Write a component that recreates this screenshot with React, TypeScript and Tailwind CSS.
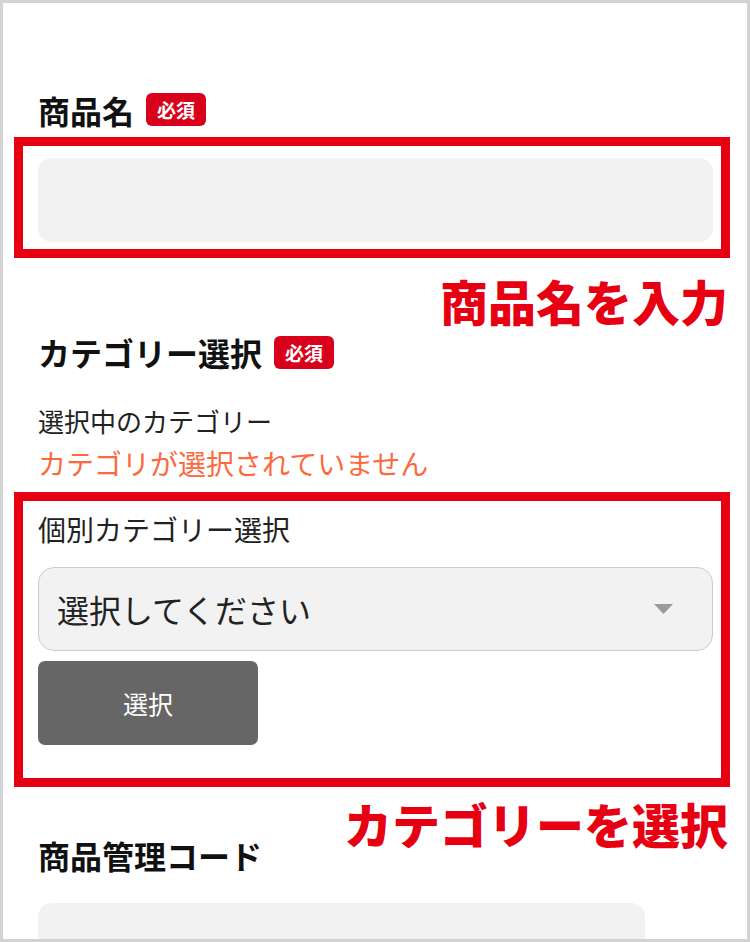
import React from 'react';

const font = "font-['Noto_Sans_CJK_JP','Noto_Sans',sans-serif]";

function RequiredBadge() {
  return (
    <span className="ml-[12px] inline-flex h-[33px] w-[60px] items-center justify-center rounded-[6px] bg-[#d9001b] text-[19px] font-bold leading-none text-white">
      必須
    </span>
  );
}

function Caret() {
  return (
    <svg width="19" height="10" viewBox="0 0 19 10" aria-hidden="true">
      <polygon points="0,0 19,0 9.5,10" fill="#9a9a9a" />
    </svg>
  );
}

export default function App() {
  return (
    <div className={`h-[942px] w-[750px] overflow-hidden border-[3px] border-[#d3d3d3] bg-white px-[11px] ${font}`}>
      {/* 商品名 */}
      <div className="mt-[90px] flex h-[33px] items-center pl-[24px]">
        <h2 className="text-[32px] font-bold leading-none text-[#111]">商品名</h2>
        <RequiredBadge />
      </div>
      <div className="mt-[11px] mr-[6px] border-[9px] border-[#e60012] pt-[12px] pr-[8px] pb-[7px] pl-[15px]">
        <div className="h-[84px] rounded-[14px] bg-[#f2f2f2]" />
      </div>
      <p className="mt-[18px] pr-[8px] text-right text-[48px] font-black leading-none text-[#e60012]">
        商品名を入力
      </p>

      {/* カテゴリー選択 */}
      <div className="mt-[12px] flex h-[32px] items-center pl-[24px]">
        <h2 className="text-[32px] font-bold leading-none text-[#111]">カテゴリー選択</h2>
        <RequiredBadge />
      </div>
      <p className="mt-[40px] pl-[24px] text-[26px] leading-none text-[#222]">選択中のカテゴリー</p>
      <p className="mt-[15px] pl-[24px] text-[28px] leading-none text-[#fa6a3c]">カテゴリが選択されていません</p>

      <div className="mt-[15px] mr-[6px] border-[9px] border-[#e60012] pt-[14px] pr-[8px] pb-[33px] pl-[15px]">
        <p className="text-[28px] leading-none text-[#222]">個別カテゴリー選択</p>
        <div className="mt-[24px] flex h-[84px] items-center justify-between rounded-[16px] border-[1.5px] border-[#cccccc] bg-[#f2f2f2] pr-[39px] pl-[18px]">
          <span className="text-[32px] leading-none text-[#222]">選択してください</span>
          <Caret />
        </div>
        <button
          type="button"
          className="mt-[10px] flex h-[84px] w-[220px] items-center justify-center rounded-[7px] bg-[#666666] text-[25px] leading-none text-white"
        >
          選択
        </button>
      </div>
      <p className="mt-[12px] pr-[8px] text-right text-[48px] font-black leading-none text-[#e60012]">
        カテゴリーを選択
      </p>

      {/* 商品管理コード */}
      <h2 className="-mt-[8px] pl-[24px] text-[32px] font-bold leading-none text-[#111]">商品管理コード</h2>
      <div className="mt-[32px] ml-[24px] h-[84px] w-[607px] rounded-[14px] bg-[#f2f2f2]" />
    </div>
  );
}
